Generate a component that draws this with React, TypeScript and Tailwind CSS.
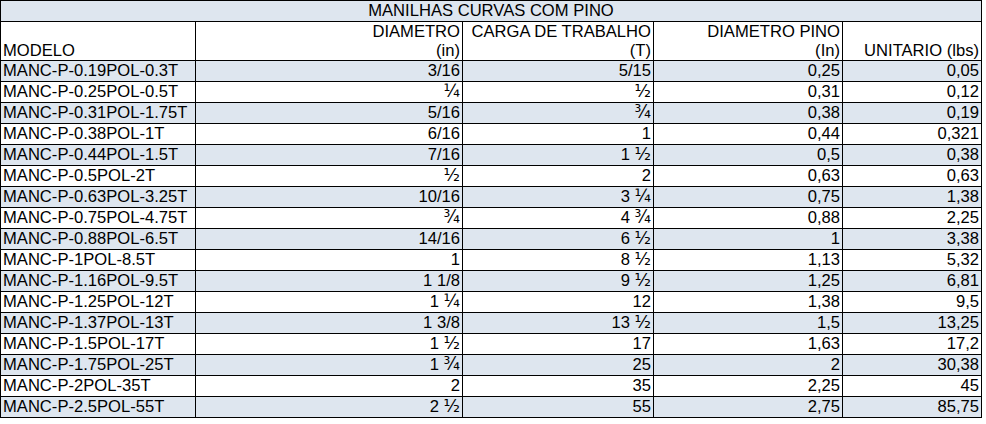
import React from "react";

const rows: [string, string, string, string, string][] = [
  ["MANC-P-0.19POL-0.3T", "3/16", "5/15", "0,25", "0,05"],
  ["MANC-P-0.25POL-0.5T", "¼", "½", "0,31", "0,12"],
  ["MANC-P-0.31POL-1.75T", "5/16", "¾", "0,38", "0,19"],
  ["MANC-P-0.38POL-1T", "6/16", "1", "0,44", "0,321"],
  ["MANC-P-0.44POL-1.5T", "7/16", "1 ½", "0,5", "0,38"],
  ["MANC-P-0.5POL-2T", "½", "2", "0,63", "0,63"],
  ["MANC-P-0.63POL-3.25T", "10/16", "3 ¼", "0,75", "1,38"],
  ["MANC-P-0.75POL-4.75T", "¾", "4 ¾", "0,88", "2,25"],
  ["MANC-P-0.88POL-6.5T", "14/16", "6 ½", "1", "3,38"],
  ["MANC-P-1POL-8.5T", "1", "8 ½", "1,13", "5,32"],
  ["MANC-P-1.16POL-9.5T", "1 1/8", "9 ½", "1,25", "6,81"],
  ["MANC-P-1.25POL-12T", "1 ¼", "12", "1,38", "9,5"],
  ["MANC-P-1.37POL-13T", "1 3/8", "13 ½", "1,5", "13,25"],
  ["MANC-P-1.5POL-17T", "1 ½", "17", "1,63", "17,2"],
  ["MANC-P-1.75POL-25T", "1 ¾", "25", "2", "30,38"],
  ["MANC-P-2POL-35T", "2", "35", "2,25", "45"],
  ["MANC-P-2.5POL-55T", "2 ½", "55", "2,75", "85,75"],
];

function Val({ v }: { v: string }) {
  const parts = v.split(/([¼½¾])/);
  return (
    <>
      {parts.map((p, i) =>
        /[¼½¾]/.test(p) ? (
          <span
            key={i}
            className="text-[17px] leading-[16px]"
            style={{ fontFamily: '"DejaVu Sans", "Noto Sans", sans-serif' }}
          >
            {p}
          </span>
        ) : (
          <React.Fragment key={i}>{p}</React.Fragment>
        )
      )}
    </>
  );
}

export default function App() {
  return (
    <div
      className="min-h-screen w-full bg-white text-black text-[16.6px]"
      style={{ fontFamily: '"Liberation Sans", Arial, sans-serif' }}
    >
      <div className="grid w-[982px] grid-cols-[194px_266px_190px_188px_138px] gap-px bg-black p-px">
        <div className="col-span-5 h-[20px] bg-[#dee6ef] text-center leading-[20px]">
          MANILHAS CURVAS COM PINO
        </div>
        <div className="flex h-[38px] flex-col justify-end bg-white pl-[2px] leading-[19px]">
          MODELO
        </div>
        <div className="flex h-[38px] flex-col items-end justify-end bg-white pr-[2px] leading-[19px]">
          <span>DIAMETRO</span>
          <span>(in)</span>
        </div>
        <div className="flex h-[38px] flex-col items-end justify-end bg-white pr-[2px] leading-[19px]">
          <span>CARGA DE TRABALHO</span>
          <span>(T)</span>
        </div>
        <div className="flex h-[38px] flex-col items-end justify-end bg-white pr-[2px] leading-[19px]">
          <span>DIAMETRO PINO</span>
          <span>(In)</span>
        </div>
        <div className="flex h-[38px] flex-col items-end justify-end bg-white pr-[2px] leading-[19px]">
          UNITARIO (lbs)
        </div>
        {rows.map((r, i) => {
          const bg = i % 2 === 0 ? "bg-[#dee6ef]" : "bg-white";
          return (
            <React.Fragment key={r[0]}>
              <div className={`${bg} h-[20px] whitespace-nowrap pl-[2px] leading-[20px]`}>{r[0]}</div>
              <div className={`${bg} h-[20px] whitespace-nowrap pr-[2px] text-right leading-[20px]`}><Val v={r[1]} /></div>
              <div className={`${bg} h-[20px] whitespace-nowrap pr-[2px] text-right leading-[20px]`}><Val v={r[2]} /></div>
              <div className={`${bg} h-[20px] whitespace-nowrap pr-[2px] text-right leading-[20px]`}>{r[3]}</div>
              <div className={`${bg} h-[20px] whitespace-nowrap pr-[2px] text-right leading-[20px]`}>{r[4]}</div>
            </React.Fragment>
          );
        })}
      </div>
    </div>
  );
}
